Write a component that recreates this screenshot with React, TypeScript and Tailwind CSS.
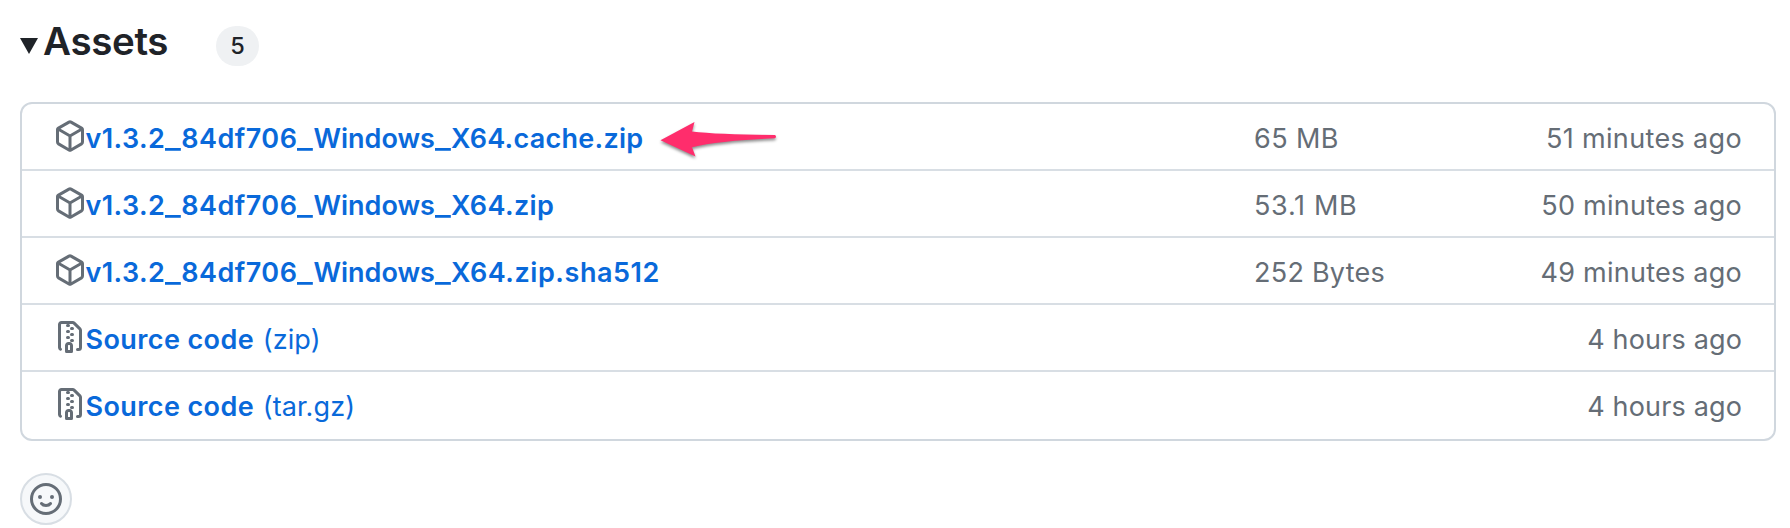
import type { ReactNode } from "react";

const PACKAGE_PATH =
  "m8.878.392 5.25 3.045c.54.314.872.89.872 1.514v6.098a1.75 1.75 0 0 1-.872 1.514l-5.25 3.045a1.75 1.75 0 0 1-1.756 0l-5.25-3.045A1.75 1.75 0 0 1 1 11.049V4.951c0-.624.332-1.201.872-1.514L7.122.392a1.75 1.75 0 0 1 1.756 0ZM7.875 1.69l-4.63 2.685L8 7.133l4.755-2.758-4.63-2.685a.248.248 0 0 0-.25 0ZM2.5 5.677v5.372c0 .09.047.171.125.216l4.625 2.683V8.432Zm6.25 8.271 4.625-2.683a.25.25 0 0 0 .125-.216V5.677L8.75 8.432Z";
const ZIP_PATH =
  "M3.5 1.75v11.5c0 .09.048.173.126.217a.75.75 0 0 1-.752 1.298A1.748 1.748 0 0 1 2 13.25V1.75C2 .784 2.784 0 3.75 0h5.586c.464 0 .909.185 1.237.513l2.914 2.914c.329.328.513.773.513 1.237v8.586A1.75 1.75 0 0 1 12.25 15h-.5a.75.75 0 0 1 0-1.5h.5a.25.25 0 0 0 .25-.25V4.664a.25.25 0 0 0-.073-.177L9.513 1.573a.25.25 0 0 0-.177-.073H7.25a.75.75 0 0 1 0 1.5h-.5a.75.75 0 0 1 0-1.5h-3a.25.25 0 0 0-.25.25Zm3.75 8.75h.5c.966 0 1.75.784 1.75 1.75v3a.75.75 0 0 1-.75.75h-2.5a.75.75 0 0 1-.75-.75v-3c0-.966.784-1.75 1.75-1.75ZM6 5.25a.75.75 0 0 1 .75-.75h.5a.75.75 0 0 1 0 1.5h-.5A.75.75 0 0 1 6 5.25Zm.75 2.25h.5a.75.75 0 0 1 0 1.5h-.5a.75.75 0 0 1 0-1.5ZM8 6.75A.75.75 0 0 1 8.75 6h.5a.75.75 0 0 1 0 1.5h-.5A.75.75 0 0 1 8 6.75ZM8.75 3h.5a.75.75 0 0 1 0 1.5h-.5a.75.75 0 0 1 0-1.5ZM8 9.75A.75.75 0 0 1 8.75 9h.5a.75.75 0 0 1 0 1.5h-.5A.75.75 0 0 1 8 9.75Zm-1 2.5v2.25h1v-2.25a.25.25 0 0 0-.25-.25h-.5a.25.25 0 0 0-.25.25Z";

function Octicon({ d }: { d: string }) {
  return (
    <svg viewBox="0 0 16 16" className="size-8 shrink-0 text-[#656d76]" fill="currentColor" aria-hidden="true">
      <path d={d} />
    </svg>
  );
}

function Smiley() {
  return (
    <svg viewBox="0 0 16 16" className="size-8 text-[#656d76]" fill="currentColor" aria-hidden="true">
      <circle cx="8" cy="8" r="7.25" fill="none" stroke="currentColor" strokeWidth="1.5" />
      <circle cx="5" cy="7" r="1" />
      <circle cx="11" cy="7" r="1" />
      <path d="M5.75 10.25S6.5 11.25 8 11.25s2.25-1 2.25-1" fill="none" stroke="currentColor" strokeWidth="1.5" strokeLinecap="round" />
    </svg>
  );
}

function Arrow() {
  return (
    <svg
      viewBox="0 0 120 40"
      className="ml-[16px] h-[40px] w-[120px] shrink-0 drop-shadow-[0_2px_1.5px_rgba(0,0,0,0.45)]"
      aria-hidden="true"
    >
      <path d="M1.5 20.2 35.5 2 33 11.6Q60 14.8 116 15Q118 16.8 116 18.2Q60 20.5 33 27.2L36.5 36.5Z" fill="#ff2d6c" />
    </svg>
  );
}

function Underscore() {
  return <span className="mr-[3.3px] inline-block origin-left scale-x-[1.25]">_</span>;
}

/** File name with wider digits and underscores in its version and commit parts. */
function BuildName({ suffix, suffixClass }: { suffix: string; suffixClass: string }) {
  return (
    <>
      <span className="tracking-[0.4px]">v1.3.2</span>
      <Underscore />
      <span className="tracking-[0.5px]">84df706</span>
      <Underscore />
      <span>Windows</span>
      <Underscore />
      <span className={suffixClass}>{suffix}</span>
    </>
  );
}

function SourceName() {
  return <span className="mr-[1px] tracking-[0.4px]">Source code</span>;
}

type Asset = {
  id: string;
  icon: string;
  name: ReactNode;
  format?: string;
  size?: string;
  sizeClass?: string;
  age: string;
  ageClass: string;
  marker?: ReactNode;
};

const assets: Asset[] = [
  {
    id: "cache",
    icon: PACKAGE_PATH,
    name: <BuildName suffix="X64.cache.zip" suffixClass="tracking-[0.28px]" />,
    size: "65 MB",
    sizeClass: "tracking-[0.4px]",
    age: "51 minutes ago",
    ageClass: "tracking-[0.35px]",
    marker: <Arrow />,
  },
  {
    id: "zip",
    icon: PACKAGE_PATH,
    name: <BuildName suffix="X64.zip" suffixClass="tracking-[0.4px]" />,
    size: "53.1 MB",
    sizeClass: "tracking-[0.7px]",
    age: "50 minutes ago",
    ageClass: "tracking-[0.25px]",
  },
  {
    id: "sha512",
    icon: PACKAGE_PATH,
    name: <BuildName suffix="X64.zip.sha512" suffixClass="tracking-[0.55px]" />,
    size: "252 Bytes",
    sizeClass: "tracking-[0.25px]",
    age: "49 minutes ago",
    ageClass: "tracking-[0.25px]",
  },
  { id: "src-zip", icon: ZIP_PATH, name: <SourceName />, format: "(zip)", age: "4 hours ago", ageClass: "tracking-[0.15px]" },
  { id: "src-tar", icon: ZIP_PATH, name: <SourceName />, format: "(tar.gz)", age: "4 hours ago", ageClass: "tracking-[0.15px]" },
];

function AssetRow({ asset }: { asset: Asset }) {
  return (
    <li className="flex h-[67px] border-b-2 border-[#d8dee4] pt-4 pr-8 pl-8 last:border-b-0">
      <div className="flex w-[1200px] items-start">
        <Octicon d={asset.icon} />
        <a href="#" className="-ml-[0.5px] pt-px whitespace-pre text-[#0969da]">
          <span className="font-semibold">{asset.name}</span>
          {asset.format && <span className="tracking-[0.1px]"> {asset.format}</span>}
        </a>
        {asset.marker}
      </div>
      <span className="pt-px text-[#656d76]">
        <span className={asset.sizeClass}>{asset.size}</span>
      </span>
      <span className="ml-auto pt-px text-[#656d76]">
        <span className={asset.ageClass}>{asset.age}</span>
      </span>
    </li>
  );
}

export default function App() {
  return (
    <main className="h-[528px] bg-white pt-[20px] pr-[14px] pl-5 font-['Inter',sans-serif] text-[27px] leading-[36px] text-[#1f2328]">
      <header className="flex h-[48px] items-start">
        <svg viewBox="0 0 18 16" className="mt-[18px] h-[16px] w-[18px]" aria-hidden="true">
          <path d="M0 0h18L9 16Z" fill="#1f2328" />
        </svg>
        <h3 className="ml-[5px] w-[125px] text-[38.5px] leading-[42px] font-semibold tracking-[-0.35px]">Assets</h3>
        <span className="mt-[6px] ml-[48px] flex h-[40px] w-[43px] items-center justify-center rounded-full bg-[#eff1f3] text-[23.5px] font-medium">
          5
        </span>
      </header>
      <ul className="mt-[34px] rounded-xl border-2 border-[#d0d7de]">
        {assets.map((asset) => (
          <AssetRow key={asset.id} asset={asset} />
        ))}
      </ul>
      <button
        type="button"
        aria-label="Add a reaction"
        className="mt-8 flex size-[52px] items-center justify-center rounded-full border-2 border-[#d8dee4] bg-[#f6f8fa]"
      >
        <Smiley />
      </button>
    </main>
  );
}
